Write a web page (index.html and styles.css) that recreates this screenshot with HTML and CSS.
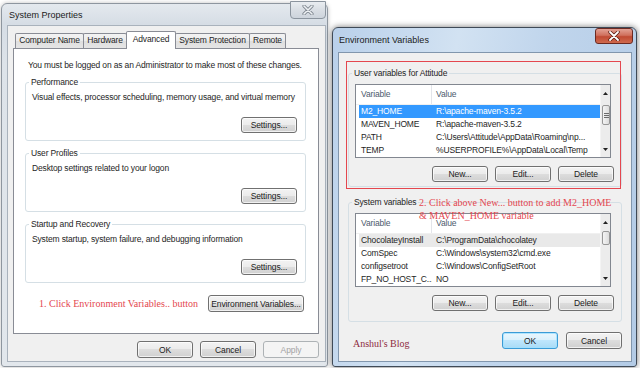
FILE: index.html
```html
<!DOCTYPE html>
<html lang="en">
<head>
    <meta charset="utf-8">
    <title>System Properties / Environment Variables</title>
    <link rel="stylesheet" href="styles.css">
</head>
<body>
<div class="desktop">

    <div class="window inactive sysprops">
        <div class="titlebar">
            <span class="title">System Properties</span>
            <span class="close-btn">
                <svg width="12" height="10" viewBox="0 0 12 10"><path d="M2 1 L10 9 M10 1 L2 9" stroke="#7f8790" stroke-width="3.2" stroke-linecap="round"/><path d="M2 1 L10 9 M10 1 L2 9" stroke="#eef1f4" stroke-width="1.6" stroke-linecap="round"/></svg>
            </span>
        </div>
        <div class="client">
            <div class="tabs">
                <span class="tab tab-name">Computer Name</span>
                <span class="tab tab-hw">Hardware</span>
                <span class="tab tab-adv active">Advanced</span>
                <span class="tab tab-prot">System Protection</span>
                <span class="tab tab-rem">Remote</span>
            </div>
            <div class="tab-panel">
                <p class="admin-note">You must be logged on as an Administrator to make most of these changes.</p>

                <fieldset class="group">
                    <legend>Performance</legend>
                    <p>Visual effects, processor scheduling, memory usage, and virtual memory</p>
                    <div class="group-actions"><button class="btn btn-settings">Settings...</button></div>
                </fieldset>

                <fieldset class="group">
                    <legend>User Profiles</legend>
                    <p>Desktop settings related to your logon</p>
                    <div class="group-actions"><button class="btn btn-settings">Settings...</button></div>
                </fieldset>

                <fieldset class="group">
                    <legend>Startup and Recovery</legend>
                    <p>System startup, system failure, and debugging information</p>
                    <div class="group-actions"><button class="btn btn-settings">Settings...</button></div>
                </fieldset>

                <div class="env-row">
                    <span class="annot">1. Click Environment Variables.. button</span>
                    <button class="btn btn-env">Environment Variables...</button>
                </div>
            </div>
            <div class="dialog-buttons">
                <button class="btn btn-dlg">OK</button>
                <button class="btn btn-dlg">Cancel</button>
                <button class="btn btn-dlg" disabled>Apply</button>
            </div>
        </div>
    </div>

    <div class="window active-win envvars">
        <div class="titlebar">
            <span class="title">Environment Variables</span>
            <span class="close-btn close-red">
                <svg width="12" height="10" viewBox="0 0 12 10"><path d="M2 1 L10 9 M10 1 L2 9" stroke="#5a1d14" stroke-width="3.4" stroke-linecap="round"/><path d="M2 1 L10 9 M10 1 L2 9" stroke="#ffffff" stroke-width="1.8" stroke-linecap="round"/></svg>
            </span>
        </div>
        <div class="client env-client">

            <fieldset class="group env-group user-vars">
                <legend>User variables for Attitude</legend>
                <div class="listview">
                    <div class="lv-body">
                        <div class="lv-head"><span>Variable</span><span>Value</span></div>
                        <div class="lv-row selected"><span>M2_HOME</span><span>R:\apache-maven-3.5.2</span></div>
                        <div class="lv-row"><span>MAVEN_HOME</span><span>R:\apache-maven-3.5.2</span></div>
                        <div class="lv-row"><span>PATH</span><span>C:\Users\Attitude\AppData\Roaming\np...</span></div>
                        <div class="lv-row"><span>TEMP</span><span>%USERPROFILE%\AppData\Local\Temp</span></div>
                    </div>
                    <div class="scrollbar">
                        <span class="sb-arrow"><svg width="5" height="3" viewBox="0 0 5 3"><path d="M0 3 L2.5 0 L5 3 Z" fill="#222"/></svg></span>
                        <span class="sb-track"><span class="sb-thumb thumb-big"><svg width="5" height="5" viewBox="0 0 5 5"><path d="M0 0.5 H5 M0 2.5 H5 M0 4.5 H5" stroke="#6b6b6b" stroke-width="1"/></svg></span></span>
                        <span class="sb-arrow"><svg width="5" height="3" viewBox="0 0 5 3"><path d="M0 0 L2.5 3 L5 0 Z" fill="#222"/></svg></span>
                    </div>
                </div>
                <div class="list-actions">
                    <button class="btn btn-list">New...</button>
                    <button class="btn btn-list">Edit...</button>
                    <button class="btn btn-list">Delete</button>
                </div>
            </fieldset>

            <fieldset class="group env-group sys-vars">
                <legend>System variables</legend>
                <div class="listview">
                    <div class="lv-body">
                        <div class="lv-head"><span>Variable</span><span>Value</span></div>
                        <div class="lv-row hover"><span>ChocolateyInstall</span><span>C:\ProgramData\chocolatey</span></div>
                        <div class="lv-row"><span>ComSpec</span><span>C:\Windows\system32\cmd.exe</span></div>
                        <div class="lv-row"><span>configsetroot</span><span>C:\Windows\ConfigSetRoot</span></div>
                        <div class="lv-row"><span>FP_NO_HOST_C...</span><span>NO</span></div>
                    </div>
                    <div class="scrollbar">
                        <span class="sb-arrow"><svg width="5" height="3" viewBox="0 0 5 3"><path d="M0 3 L2.5 0 L5 3 Z" fill="#222"/></svg></span>
                        <span class="sb-track"><span class="sb-thumb thumb-small"></span></span>
                        <span class="sb-arrow"><svg width="5" height="3" viewBox="0 0 5 3"><path d="M0 0 L2.5 3 L5 0 Z" fill="#222"/></svg></span>
                    </div>
                </div>
                <div class="list-actions">
                    <button class="btn btn-list">New...</button>
                    <button class="btn btn-list">Edit...</button>
                    <button class="btn btn-list">Delete</button>
                </div>
            </fieldset>

            <div class="env-footer">
                <span class="blog">Anshul's Blog</span>
                <div class="footer-buttons">
                    <button class="btn btn-dlg btn-default">OK</button>
                    <button class="btn btn-dlg">Cancel</button>
                </div>
            </div>

            <!-- annotations drawn on top of the dialog -->
            <div class="mark-box"></div>
            <p class="annot annot-2">2. Click above New... button to add M2_HOME<br>&amp; MAVEN_HOME variable</p>
        </div>
    </div>

</div>
</body>
</html>
```

FILE: styles.css
```css
* {
    box-sizing: border-box;
}

body {
    margin: 0;
    background: #fff;
    font-family: "Liberation Sans", Arial, sans-serif;
    font-size: 8.5px;
    letter-spacing: -0.15px;
    color: #1e1e1e;
}

p {
    margin: 0;
}

.desktop {
    position: relative;
    width: 640px;
    height: 368px;
    overflow: hidden;
}

/* ---------- window frames ---------- */
.window {
    position: absolute;
    border: 1px solid #8e969f;
    border-radius: 6px 6px 3px 3px;
}

.sysprops {
    left: 1px;
    top: 3px;
    width: 327px;
    height: 364px;
    padding: 0 1px 4px 5px;
    background: linear-gradient(180deg, #e4e9ee 0, #d6dde5 20px, #dde3e9 60px, #e2e7ec 100%);
    box-shadow: 0 0 4px rgba(0, 0, 0, 0.25);
}

.envvars {
    left: 332px;
    top: 27px;
    width: 305px;
    height: 340px;
    padding: 0 4px 4px 5px;
    border-color: #3f4a57;
    background: linear-gradient(100deg, #b9d0ea 0, #d2e2f2 35%, #c0d5ec 60%, #b3cbe6 100%);
    box-shadow: 0 0 6px rgba(0, 0, 0, 0.55);
}

.titlebar {
    display: flex;
    align-items: flex-start;
    justify-content: space-between;
    height: 21px;
}

.envvars .titlebar {
    height: 24px;
}

.title {
    font-size: 9px;
    letter-spacing: 0;
    line-height: 12px;
    margin-top: 5px;
    padding-left: 2px;
    color: #1b1b1b;
}

.envvars .title {
    margin-top: 6px;
    padding-left: 1px;
}

.close-btn {
    display: flex;
    align-items: center;
    justify-content: center;
    width: 36px;
    height: 18px;
    margin-top: -3px;
    border: 1px solid #8b949e;
    border-radius: 0 0 4px 4px;
    background: linear-gradient(180deg, #e9edf1 0, #d9dee4 50%, #cdd4dc 100%);
}

.close-red {
    width: 38px;
    height: 16px;
    margin-top: 0;
    margin-right: -1px;
    border-color: #6b2a22;
    border-radius: 3px;
    background: linear-gradient(180deg, #e3a194 0, #d0705d 45%, #c04a33 55%, #cf6a4e 100%);
}

.client {
    background: #f0f0f0;
    border: 1px solid #a9b2bc;
    width: 319px;
    height: 337px;
    padding: 5px 6px 0 5px;
}

.env-client {
    position: relative;
    width: 294px;
    height: 310px;
    padding: 14px 9px 0 9px;
    border-color: #8196ad;
}

/* ---------- tabs ---------- */
.tabs {
    display: flex;
    align-items: flex-end;
    height: 17px;
    padding-left: 2px;
    position: relative;
    z-index: 1;
}

.tab {
    height: 15px;
    margin-right: -1px;
    border: 1px solid #898c95;
    border-bottom: none;
    border-radius: 2px 2px 0 0;
    background: linear-gradient(180deg, #f3f3f3 0, #ebebeb 50%, #dedede 50%, #e5e5e5 100%);
    text-align: center;
    line-height: 13px;
    white-space: nowrap;
}

.tab.active {
    height: 18px;
    margin-bottom: -1px;
    background: #fff;
    line-height: 14px;
    position: relative;
}

.tab-name { width: 69px; }
.tab-hw { width: 44px; }
.tab-adv { width: 50px; }
.tab-prot { width: 75px; }
.tab-rem { width: 37px; }

.tab-panel {
    width: 306px;
    height: 286px;
    border: 1px solid #898c95;
    background: #fff;
    padding: 10px 12px 0 11px;
}

.admin-note {
    line-height: 12px;
    padding-left: 3px;
}

/* ---------- group boxes ---------- */
.group {
    margin: 5px 0 0;
    padding: 3px 8px 7px 6px;
    border: 1px solid #d5dfe5;
    border-radius: 3px;
    min-inline-size: 0;
}

.group + .group {
    margin-top: 6px;
}

.group legend {
    margin-left: -3px;
    padding: 0 2px;
    line-height: 12px;
}

.group p {
    line-height: 12px;
}

.group-actions {
    display: flex;
    justify-content: flex-end;
    margin-top: 14px;
}

/* ---------- buttons ---------- */
.btn {
    font-family: inherit;
    font-size: 8.5px;
    letter-spacing: -0.1px;
    color: #1b1b1b;
    height: 16px;
    padding: 0;
    border: 1px solid #707070;
    border-radius: 3px;
    background: linear-gradient(180deg, #f3f3f3 0, #ebebeb 50%, #dddddd 50%, #d0d0d0 100%);
    box-shadow: inset 0 0 0 1px rgba(255, 255, 255, 0.7);
}

.btn:disabled {
    color: #a3a3a3;
    border-color: #adb2b5;
    background: #f4f4f4;
    box-shadow: none;
}

.btn-settings {
    width: 56px;
}

.btn-env {
    width: 96px;
    height: 17px;
}

.btn-dlg {
    width: 56px;
    height: 17px;
}

.btn-list {
    width: 56px;
}

.btn-default {
    border-color: #3b9bd6;
    background: linear-gradient(180deg, #eaf6fd 0, #d9f0fc 50%, #bee6fd 50%, #a9dbf6 100%);
    box-shadow: inset 0 0 0 1px rgba(160, 225, 255, 0.8);
}

.env-row {
    display: flex;
    justify-content: flex-end;
    align-items: center;
    gap: 10px;
    margin-top: 12px;
    padding-right: 2px;
}

.annot {
    font-family: "Liberation Serif", "Times New Roman", serif;
    font-size: 10px;
    letter-spacing: 0;
    color: #e4474f;
}

.dialog-buttons {
    display: flex;
    justify-content: flex-end;
    gap: 7px;
    margin-top: 7px;
}

/* ---------- environment variables dialog ---------- */
.env-group {
    margin: 0;
    padding: 5px 7px 4px 6px;
}

.env-group + .env-group {
    margin-top: 9px;
}

.sys-vars {
    padding-bottom: 10px;
}

.listview {
    display: flex;
    width: 256px;
    height: 74px;
    border: 1px solid #828790;
    background: #fff;
}

.lv-body {
    flex: 1;
    overflow: hidden;
}

.lv-head {
    display: grid;
    grid-template-columns: 76px 1fr;
    height: 20px;
    align-items: center;
    color: #4c5a6d;
    border-bottom: 1px solid #f0f0f0;
}

.lv-head span {
    padding-left: 5px;
    line-height: 19px;
}

.lv-head span:first-child {
    border-right: 1px solid #e3e5ea;
}

.lv-head span + span {
    padding-left: 4px;
}

.lv-row {
    display: grid;
    grid-template-columns: 73px 1fr;
    height: 13px;
    line-height: 13px;
    margin-left: 3px;
    white-space: nowrap;
}

.lv-row span {
    overflow: hidden;
    padding-left: 2px;
}

.lv-row span + span {
    padding-left: 4px;
}

.lv-row.selected {
    background: #3399ff;
    color: #fff;
}

.lv-row.hover {
    background: #e9e9e9;
}

.scrollbar {
    display: flex;
    flex-direction: column;
    width: 10px;
    background: #ececec;
    border-left: 1px solid #f4f4f4;
}

.sb-arrow {
    display: flex;
    align-items: center;
    justify-content: center;
    height: 16px;
}

.sb-track {
    flex: 1;
    padding: 4px 0 0 1px;
}

.sb-thumb {
    display: flex;
    align-items: center;
    justify-content: center;
    width: 8px;
    border: 1px solid #979797;
    border-radius: 2px;
    background: linear-gradient(90deg, #f4f4f4, #dcdcdc);
}

.thumb-big {
    height: 20px;
}

.thumb-small {
    height: 14px;
    margin-top: -3px;
}

.list-actions {
    display: flex;
    justify-content: flex-end;
    gap: 7px;
    margin-top: 8px;
}

.env-footer {
    display: flex;
    justify-content: space-between;
    align-items: center;
    margin-top: 10px;
    padding-left: 5px;
}

.blog {
    font-family: "Liberation Serif", "Times New Roman", serif;
    font-size: 10px;
    letter-spacing: 0;
    color: #8e2b3f;
    margin-top: 5px;
}

.footer-buttons {
    display: flex;
    gap: 8px;
}

/* annotations over the dialog */
.mark-box {
    position: absolute;
    left: 7px;
    top: 8px;
    width: 275px;
    height: 128px;
    border: 1px solid #e4474f;
}

.annot-2 {
    position: absolute;
    left: 80px;
    top: 143px;
    line-height: 13px;
    font-size: 10px;
}
```
